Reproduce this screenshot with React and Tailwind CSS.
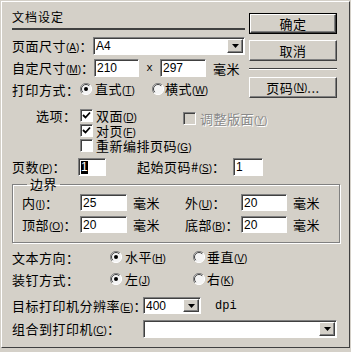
import React from "react";

const sunken =
  "border border-t-[#808080] border-l-[#808080] border-r-white border-b-white shadow-[inset_1px_1px_0_#404040]";
const raised =
  "border border-t-white border-l-white border-r-[#404040] border-b-[#404040] shadow-[inset_-1px_-1px_0_#808080]";

const Key = ({ k }) => (
  <span className="text-[10px] tracking-normal font-['Liberation_Sans',sans-serif]">
    (<span className="underline">{k}</span>)
  </span>
);

const Field = ({ value, w, h = "h-[18px]", selected }) => (
  <div className={`${sunken} ${w} ${h} shrink-0 bg-white flex items-center pl-[2px] text-[12px] font-['Liberation_Sans',sans-serif] tracking-normal`}>
    {selected ? <span className="bg-black text-white leading-[13px]">{value}</span> : value}
  </div>
);

const Arrow = () => (
  <div className={`${raised} bg-[#d4d0c8] w-[16px] h-full flex items-center justify-center`}>
    <svg width="7" height="4" viewBox="0 0 7 4">
      <polygon points="0,0 7,0 3.5,4" fill="black" />
    </svg>
  </div>
);

const Select = ({ value, w, h = "h-[18px]" }) => (
  <div className={`${sunken} ${w} ${h} shrink-0 bg-white flex items-stretch text-[12px] font-['Liberation_Sans',sans-serif] tracking-normal`}>
    <div className="flex-1 flex items-center pl-[2px]">{value}</div>
    <div className="p-px">
      <Arrow />
    </div>
  </div>
);

const Radio = ({ on }) => (
  <svg width="12" height="12" viewBox="0 0 12 12" className="shrink-0">
    <circle cx="6" cy="6" r="5.5" fill="#f4f4f4" />
    <path d="M10 2 A5.5 5.5 0 0 0 2 10" stroke="#808080" strokeWidth="1" fill="none" />
    <path d="M9.2 2.8 A4.5 4.5 0 0 0 2.8 9.2" stroke="#404040" strokeWidth="1" fill="none" />
    <path d="M2 10 A5.5 5.5 0 0 0 10 2" stroke="#ffffff" strokeWidth="1" fill="none" />
    {on && <circle cx="6" cy="6" r="2" fill="black" />}
  </svg>
);

const Check = ({ on, disabled }) => (
  <div className={`${sunken} w-[13px] h-[13px] shrink-0 ${disabled ? "bg-[#d4d0c8]" : "bg-white"} flex items-center justify-center`}>
    {on && (
      <svg width="9" height="9" viewBox="0 0 9 9">
        <path d="M1 4 L3.5 6.5 L8 1.5" stroke="black" strokeWidth="1.8" fill="none" />
      </svg>
    )}
  </div>
);

const Button = ({ children, def }) => (
  <div className={`${def ? "border border-black" : ""} h-[21px] w-full`}>
    <div className={`${raised} h-full flex items-center justify-center text-[13px]`}>{children}</div>
  </div>
);

export default function App() {
  return (
    <div className="w-[351px] h-[352px] bg-[#d4d0c8] p-px font-['Noto_Sans_CJK_SC',sans-serif] text-[13px] tracking-[0.5px] text-black leading-none whitespace-nowrap">
      <div className="h-[347px] border border-t-white border-l-white border-r-[#404040] border-b-[#404040] pl-[10px] pr-[10px] flex flex-col">
        {/* top part */}
        <div className="flex justify-between">
          <div className="w-[233px] flex flex-col">
            <div className="mt-[6px] h-[22px] border-b-2 border-[#404040] leading-[18px] text-[12px] tracking-[1px]">文档设定</div>
            <div className="mt-[7px] flex items-center h-[18px]">
              <div className="w-[81px] shrink-0">页面尺寸<Key k="A" />：</div>
              <Select value="A4" w="w-[152px]" />
            </div>
            <div className="mt-[4px] flex items-center h-[18px]">
              <div className="w-[82px] shrink-0">自定尺寸<Key k="M" />：</div>
              <Field value="210" w="w-[45px]" />
              <div className="w-[21px] text-center text-[11px] font-['Liberation_Mono',monospace] tracking-normal">x</div>
              <Field value="297" w="w-[46px]" />
              <div className="ml-[7px]">毫米</div>
            </div>
            <div className="mt-[4px] flex items-center h-[16px]">
              <div className="w-[68px] shrink-0">打印方式：</div>
              <div className="w-[72px] flex items-center gap-[3px]">
                <Radio on />
                <span>直式<Key k="T" /></span>
              </div>
              <div className="flex items-center gap-[1px]">
                <Radio />
                <span>横式<Key k="W" /></span>
              </div>
            </div>
          </div>
          <div className="w-[88px] mr-[2px] flex flex-col">
            <div className="mt-[11px]">
              <Button def>确定</Button>
            </div>
            <div className="mt-[6px]">
              <Button>取消</Button>
            </div>
            <div className="mt-[7px] border-t border-[#404040] border-b border-b-white" />
            <div className="mt-[7px]">
              <Button>页码<Key k="N" />...</Button>
            </div>
          </div>
        </div>

        {/* options */}
        <div className="mt-[10px] flex">
          <div className="w-[24px]" />
          <div className="w-[44px] h-[15px] flex items-center">选项：</div>
          <div className="flex flex-col w-[103px]">
            <div className="flex items-center gap-[3px] h-[15px]">
              <Check on />
              <span>双面<Key k="D" /></span>
            </div>
            <div className="flex items-center gap-[3px] h-[15px]">
              <Check on />
              <span>对页<Key k="F" /></span>
            </div>
            <div className="flex items-center gap-[3px] h-[15px]">
              <Check />
              <span>重新编排页码<Key k="G" /></span>
            </div>
          </div>
          <div className="mt-[4px] flex items-start gap-[4px] h-[14px]">
            <Check disabled />
            <span className="text-[#8a8a8a] [text-shadow:1px_1px_0_white]">调整版面<Key k="Y" /></span>
          </div>
        </div>

        {/* page count */}
        <div className="mt-[5px] flex items-center h-[18px]">
          <div className="w-[66px] shrink-0">页数<Key k="P" />：</div>
          <Field value="1" w="w-[28px]" selected />
          <div className="ml-[31px] w-[96px] shrink-0">起始页码#<Key k="S" />：</div>
          <Field value="1" w="w-[30px]" />
        </div>

        {/* margins */}
        <fieldset className="border border-[#808080] shadow-[inset_1px_1px_0_white,1px_1px_0_white] mr-[-1px] pl-[9px] pb-[9px]">
          <legend className="ml-[5px] px-[3px] h-[16px] leading-[16px]">边界</legend>
          <div className="mt-[2px] flex items-center h-[17px]">
            <div className="w-[58px] shrink-0">内<Key k="I" />：</div>
            <Field value="25" w="w-[47px]" h="h-[17px]" />
            <div className="ml-[6px] w-[52px] shrink-0">毫米</div>
            <div className="w-[56px] shrink-0">外<Key k="U" />：</div>
            <Field value="20" w="w-[46px]" h="h-[17px]" />
            <div className="ml-[6px]">毫米</div>
          </div>
          <div className="mt-[5px] flex items-center h-[17px]">
            <div className="w-[58px] shrink-0">顶部<Key k="O" />：</div>
            <Field value="20" w="w-[47px]" h="h-[17px]" />
            <div className="ml-[6px] w-[52px] shrink-0">毫米</div>
            <div className="w-[56px] shrink-0">底部<Key k="B" />：</div>
            <Field value="20" w="w-[46px]" h="h-[17px]" />
            <div className="ml-[6px]">毫米</div>
          </div>
        </fieldset>

        {/* direction */}
        <div className="mt-[7px] flex items-center h-[14px]">
          <div className="w-[98px] shrink-0">文本方向：</div>
          <div className="w-[83px] flex items-center gap-[3px]">
            <Radio on />
            <span>水平<Key k="H" /></span>
          </div>
          <div className="flex items-center gap-[2px]">
            <Radio />
            <span>垂直<Key k="V" /></span>
          </div>
        </div>
        <div className="mt-[8px] flex items-center h-[14px]">
          <div className="w-[98px] shrink-0">装钉方式：</div>
          <div className="w-[83px] flex items-center gap-[3px]">
            <Radio on />
            <span>左<Key k="J" /></span>
          </div>
          <div className="flex items-center gap-[2px]">
            <Radio />
            <span>右<Key k="K" /></span>
          </div>
        </div>

        {/* printer */}
        <div className="mt-[11px] flex items-center h-[17px]">
          <div className="w-[131px] shrink-0">目标打印机分辨率<Key k="E" />：</div>
          <Select value="400" w="w-[58px]" h="h-[17px]" />
          <div className="ml-[14px] text-[12px] tracking-normal font-['Liberation_Mono',monospace]">dpi</div>
        </div>
        <div className="mt-[6px] flex items-center h-[18px]">
          <div className="w-[131px] shrink-0">组合到打印机<Key k="C" />：</div>
          <Select value="" w="w-[194px]" />
        </div>
      </div>
    </div>
  );
}
